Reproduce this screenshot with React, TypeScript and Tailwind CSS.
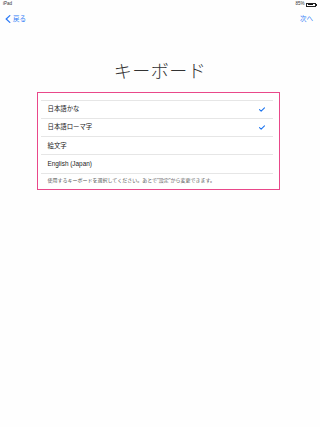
const font = { fontFamily: '"Liberation Sans", "Noto Sans CJK JP", sans-serif' };

function Check() {
  return (
    <svg width="6" height="5" viewBox="0 0 7 5" className="shrink-0">
      <path d="M0.6 2.6 L2.5 4.3 L6.4 0.6" fill="none" stroke="#1a73f0" strokeWidth="1.3" strokeLinecap="round" strokeLinejoin="round" />
    </svg>
  );
}

const rows = [
  { label: "日本語かな", checked: true },
  { label: "日本語ローマ字", checked: true },
  { label: "絵文字", checked: false },
  { label: "English (Japan)", checked: false },
];

export default function App() {
  return (
    <div className="w-[320px] h-[427px] bg-[#fefefe] overflow-hidden" style={font}>
      {/* status bar */}
      <div className="h-[9px] flex items-center justify-between pl-[3px] pr-[3px] text-[4.5px] leading-none text-[#333]">
        <span>iPad</span>
        <div className="flex items-center gap-[1.5px]">
          <span>85%</span>
          <div className="flex items-center">
            <div className="w-[10px] h-[4px] border-[0.5px] border-[#222] p-[0.5px]">
              <div className="w-[85%] h-full bg-[#111]" />
            </div>
            <div className="w-[1px] h-[2px] bg-[#222]" />
          </div>
        </div>
      </div>

      {/* nav bar */}
      <div className="h-[19px] flex items-center justify-between pl-[5px] pr-[7px] text-[6.5px] leading-none text-[#2f7cf6]">
        <div className="flex items-center gap-[2px]">
          <svg width="6" height="8" viewBox="0 0 6 8">
            <path d="M4.8 0.6 L1.2 4 L4.8 7.4" fill="none" stroke="#2f7cf6" strokeWidth="1.3" strokeLinecap="round" strokeLinejoin="round" />
          </svg>
          <span className="mt-[1px]">戻る</span>
        </div>
        <span className="mt-[1px]">次へ</span>
      </div>

      {/* title */}
      <div
        className="mt-[32px] h-[20px] flex items-center justify-center text-[18px] leading-none font-light text-[#333] tracking-[0.5px]"
        style={{ fontFamily: '"Noto Sans CJK JP", sans-serif' }}
      >
        キーボード
      </div>

      {/* keyboards list */}
      <div className="mt-[12px] ml-[37px] w-[243px] h-[98px] border-[1.5px] border-[#e9488a] bg-white pt-[6.5px] pl-[2.5px] pr-[6.5px]">
        <div className="border-t border-[#e6e6e6]">
          {rows.map((r) => (
            <div
              key={r.label}
              className="h-[18.3px] border-b border-[#e6e6e6] flex items-center justify-between pl-[7px] pr-[8px] text-[6.4px] leading-none text-[#222]"
            >
              <span>{r.label}</span>
              {r.checked && <Check />}
            </div>
          ))}
        </div>
        <div className="pl-[7px] pt-[4px] text-[5px] leading-none text-[#555]">
          使用するキーボードを選択してください。あとで"設定"から変更できます。
        </div>
      </div>
    </div>
  );
}
